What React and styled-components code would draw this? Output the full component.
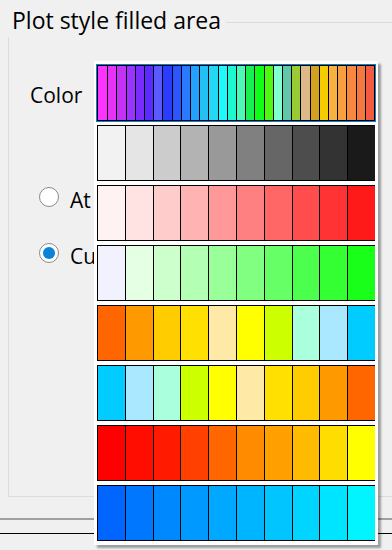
import React from 'react';
import styled, { createGlobalStyle } from 'styled-components';

const GlobalStyle = createGlobalStyle`
  html, body {
    margin: 0;
    padding: 0;
    background: #f0f0f0;
  }
  * { box-sizing: border-box; }
`;

const topRow = [
  '#ff33ff', '#e633f5', '#c433f5', '#9a33ff', '#7a2cff', '#5a2bff', '#5a5aff', '#2a3cff',
  '#2a55ff', '#2a7aff', '#24a0ff', '#24c0f5', '#24d8f5', '#1ef8f8', '#1ef8d0', '#50f8b8',
  '#18f050', '#10ff18', '#50f810', '#80ffd0', '#60c8a8', '#99cc33', '#ddb888', '#d4a020',
  '#f5cc00', '#f8b040', '#f8a040', '#f88840', '#f47840', '#f45a40',
];

const palettes = [
  ['#f2f2f2', '#e5e5e5', '#cccccc', '#b3b3b3', '#999999', '#808080', '#666666', '#4d4d4d', '#333333', '#1a1a1a'],
  ['#fff2f2', '#ffe3e3', '#ffcccc', '#ffb3b3', '#ff9999', '#ff8080', '#ff6666', '#ff4d4d', '#ff3333', '#ff1a1a'],
  ['#f2f2ff', '#e5ffe5', '#ccffcc', '#b3ffb3', '#99ff99', '#80ff80', '#66ff66', '#4dff4d', '#33ff33', '#1aff1a'],
  ['#ff6600', '#ff9900', '#ffcc00', '#ffe000', '#ffe9a6', '#ffff00', '#ccff00', '#aaffdd', '#aae8ff', '#00ccff'],
  ['#00ccff', '#aae8ff', '#aaffdd', '#ccff00', '#ffff00', '#ffe9a6', '#ffe000', '#ffcc00', '#ff9900', '#ff6600'],
  ['#ff0000', '#ff0d00', '#ff1a00', '#ff4000', '#ff6600', '#ff8c00', '#ffa000', '#ffbb00', '#ffdd00', '#ffff00'],
  ['#0066ff', '#0077ff', '#0088ff', '#0099ff', '#00a8ff', '#00b5ff', '#00c5ff', '#00d5ff', '#00e5ff', '#00f5ff'],
];

const Page = styled.div`
  position: relative;
  width: 392px;
  height: 550px;
  overflow: hidden;
  background: #f0f0f0;
  font-family: "Open Sans", "Noto Sans", sans-serif;
  color: #000;
`;

const GroupHeader = styled.div`
  display: flex;
  align-items: flex-start;
  height: 37px;
  padding: 9px 0 0 12px;
`;

const GroupTitle = styled.span`
  font-size: 23px;
  line-height: 23px;
  padding-right: 5px;
`;

const HeaderLine = styled.div`
  flex: 1;
  margin-top: 13px;
  border-top: 1px solid #dcdcdc;
`;

const Frame = styled.div`
  margin-left: 8px;
  height: 460px;
  border-left: 1px solid #dcdcdc;
  border-bottom: 1px solid #dcdcdc;
  padding: 43px 0 0 21px;
`;

const FieldRow = styled.div`
  display: flex;
  align-items: center;
  height: 30px;
  font-size: 21px;
`;

const RadioList = styled.div`
  display: flex;
  flex-direction: column;
  gap: 26px;
  margin-top: 72px;
  padding-left: 9px;
`;

const RadioRow = styled.label`
  display: flex;
  align-items: center;
  gap: 11px;
  height: 30px;
  font-size: 21px;
`;

const RadioText = styled.span`
  padding-top: 5px;
  white-space: pre;
`;

const RadioCircle = styled.span`
  display: flex;
  align-items: center;
  justify-content: center;
  width: 20px;
  height: 20px;
  border-radius: 50%;
  border: 1px solid #8a8a8a;
  background: #fff;

  &::after {
    content: '';
    width: 12px;
    height: 12px;
    border-radius: 50%;
    background: ${({ $checked }) => ($checked ? '#0a84d6' : 'transparent')};
  }
`;

const BottomArea = styled.div`
  padding-top: 21px;
`;

const GrayRule = styled.div`
  height: 2px;
  background: #a0a0a0;
`;

const BlackRule = styled.div`
  margin-top: 13px;
  height: 1px;
  background: #000;
`;

const Popup = styled.div`
  position: absolute;
  left: 94px;
  top: 61px;
  width: 284px;
  padding: 4px 3px;
  background: #fff;
  display: flex;
  flex-direction: column;
  gap: 4px;
  box-shadow: 3px 3px 2px rgba(0, 0, 0, 0.35);
`;

const StripRow = styled.div`
  display: grid;
  grid-template-columns: repeat(30, 1fr);
  height: 56px;
  border: 1px solid #000;
  outline: ${({ $selected }) => ($selected ? '1px solid #0a7fd0' : 'none')};
  outline-offset: 0;
`;

const StripCell = styled.div`
  background: ${({ $color }) => $color};
  border-left: 1px solid #000;

  &:first-child {
    border-left: none;
  }
`;

const PaletteRow = styled.div`
  display: grid;
  grid-template-columns: repeat(10, 27.8px);
  width: 278px;
  height: 56px;
  overflow: hidden;
  border-top: 1px solid #000;
  border-bottom: 1px solid #000;
  border-left: 1px solid #000;
`;

const Swatch = styled.div`
  background: ${({ $color }) => $color};
  border-right: 1px solid #000;
`;

export default function App() {
  return (
    <Page>
      <GlobalStyle />
      <GroupHeader>
        <GroupTitle>Plot style filled area</GroupTitle>
        <HeaderLine />
      </GroupHeader>
      <Frame>
        <FieldRow>Color</FieldRow>
        <RadioList>
          <RadioRow>
            <RadioCircle />
            <RadioText>At  point</RadioText>
          </RadioRow>
          <RadioRow>
            <RadioCircle $checked />
            <RadioText>Custom</RadioText>
          </RadioRow>
        </RadioList>
      </Frame>
      <BottomArea>
        <GrayRule />
        <BlackRule />
      </BottomArea>

      <Popup>
        <StripRow $selected>
          {topRow.map((c, i) => (
            <StripCell key={i} $color={c} />
          ))}
        </StripRow>
        {palettes.map((row, r) => (
          <PaletteRow key={r}>
            {row.map((c, i) => (
              <Swatch key={i} $color={c} />
            ))}
          </PaletteRow>
        ))}
      </Popup>
    </Page>
  );
}
